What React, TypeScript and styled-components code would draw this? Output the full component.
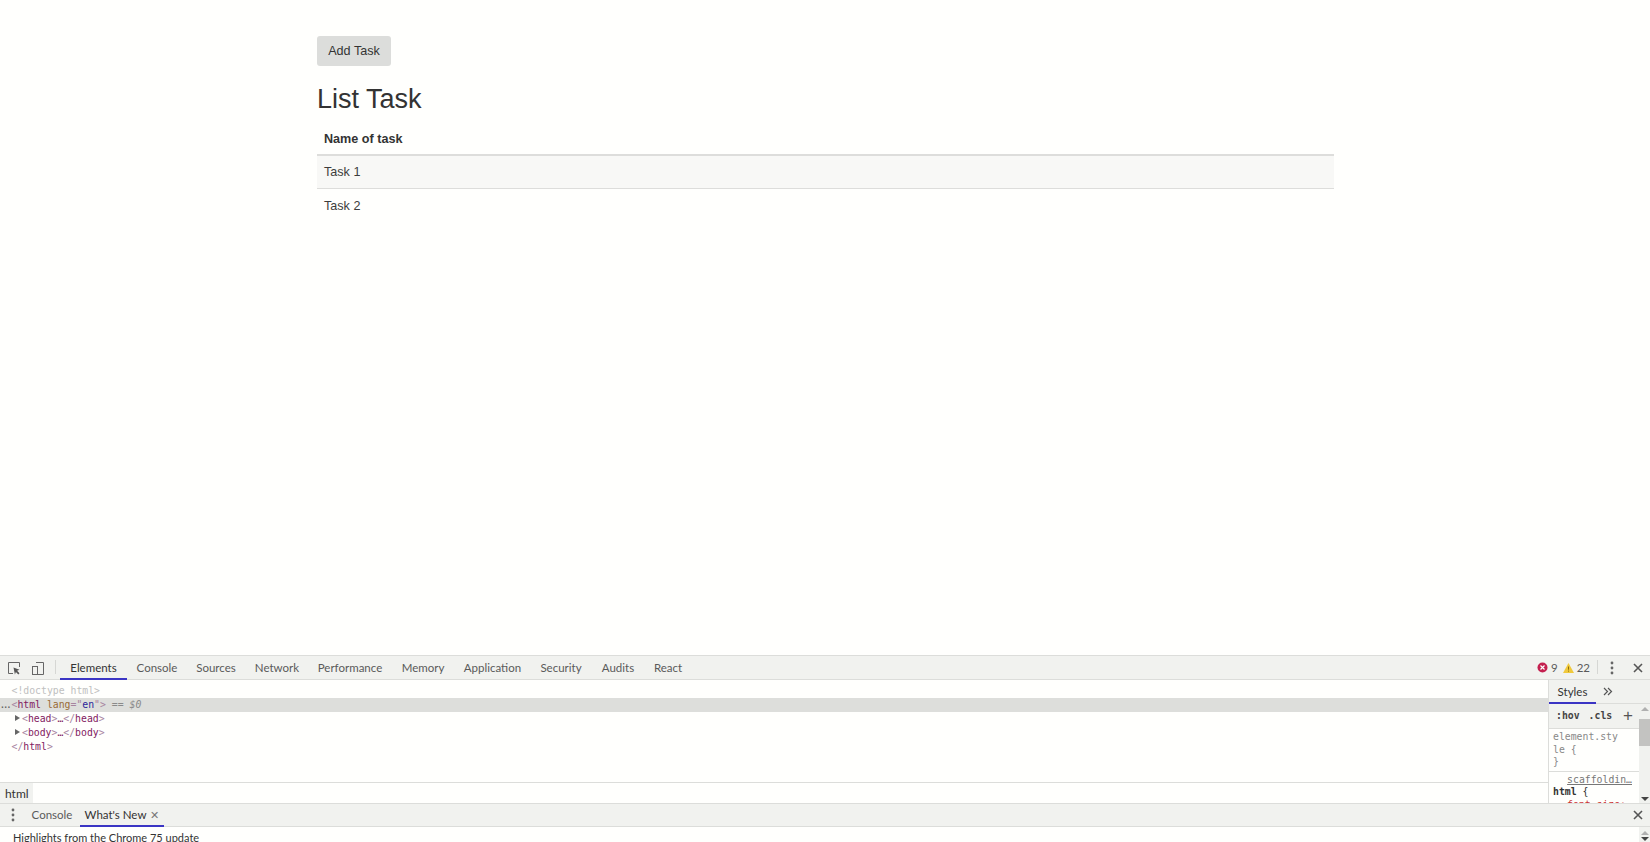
import React from "react";
import styled, { createGlobalStyle } from "styled-components";

const Global = createGlobalStyle`
  html, body { margin: 0; padding: 0; height: 100%; overflow: hidden; background: #fffffd; }
  * { box-sizing: border-box; }
`;
const Shell = styled.div`
  width: 1650px; height: 842px; display: flex; flex-direction: column; overflow: hidden;
  font-family: "Liberation Sans", Arial, sans-serif; color: #333;
`;
const Page = styled.main`
  height: 655px; flex: none; width: 1017px; margin-left: 317px; padding-top: 36px;
`;
const AddButton = styled.button`
  display: block; width: 74px; height: 30px; border: 0; border-radius: 3px; background: #dcdddb;
  color: #333; font: 12.6px/18px "Liberation Sans", Arial, sans-serif; padding: 0;
`;
const Title = styled.h2`
  margin: 18px 0 9px; font-size: 27px; line-height: 30px; font-weight: 500; color: #333;
`;
const Table = styled.table`
  width: 100%; border-collapse: collapse; font-size: 12.6px; line-height: 18px;
`;
const HeadCell = styled.th`
  text-align: left; padding: 6px 7px; border-bottom: 2px solid #dddddb; font-weight: 700; height: 32px; color: #333;
`;
const Row = styled.tr<{ $striped?: boolean }>`
  background: ${p => (p.$striped ? "#f8f8f6" : "transparent")};
`;
const Cell = styled.td<{ $lined?: boolean }>`
  padding: 7px 7px 6px; height: ${p => (p.$lined ? 33 : 34)}px; color: #3c3c3c; border-bottom: ${p => (p.$lined ? "1px solid #dddddb" : "0")};
`;
const Devtools = styled.section`
  flex: none; height: 187px; display: flex; flex-direction: column; overflow: hidden;
  font-family: Lato, "Noto Sans", sans-serif; font-size: 12px; color: #5a5a5a;
`;
const Toolbar = styled.div`
  flex: none; height: 25px; display: flex; align-items: stretch; background: #f1f2ef;
  border-top: 1px solid #dcddda; border-bottom: 1px solid #dcddda;
`;
const IconSlot = styled.div<{ $w: number }>`
  flex: none; width: ${p => p.$w}px; display: flex; align-items: center; justify-content: center; color: #666;
`;
const VDivider = styled.div`
  flex: none; width: 1px; margin: 4px 0 5px; background: #d6d7d4;
`;
const Tab = styled.div<{ $active?: boolean; $w: number }>`
  flex: none; width: ${p => p.$w}px; display: flex; align-items: center; justify-content: center; gap: 4px;
  white-space: nowrap; color: ${p => (p.$active ? "#333" : "#5a5a5a")};
  border-bottom: 2px solid ${p => (p.$active ? "#3b35c4" : "transparent")};
  margin-bottom: -1px; font-size: 11.5px;
`;
const Spacer = styled.div`
  flex: 1;
`;
const Counts = styled.div`
  display: flex; align-items: center; gap: 3px; font-size: 11.5px; padding-right: 7px;
`;
const Split = styled.div`
  flex: none; height: 123px; display: flex;
`;
const DomColumn = styled.div`
  flex: 1; display: flex; flex-direction: column; min-width: 0;
`;
const DomTree = styled.div`
  flex: 1; padding-top: 4px; font: 9.8px/14px "DejaVu Sans Mono", monospace; color: #a8449a;
`;
const DomLine = styled.div<{ $selected?: boolean; $indent?: number }>`
  height: 14px; white-space: pre; padding-left: ${p => p.$indent ?? 11.5}px; position: relative;
  background: ${p => (p.$selected ? "#dddedb" : "transparent")};
`;
const Tag = styled.span`
  color: #82195f;
`;
const Angle = styled.span`
  color: #a784a0;
`;
const Attr = styled.span`
  color: #9a6a33;
`;
const Value = styled.span`
  color: #2b1e9a;
`;
const Faint = styled.span`
  color: #c0c0c0;
`;
const Note = styled.span`
  color: #8a8a8a; font-style: italic;
`;
const Dots = styled.span`
  position: absolute; left: 0; top: 1px; width: 11px; overflow: hidden; color: #666; font-size: 8px; font-weight: 700; letter-spacing: -1.6px;
`;
const Arrow = styled.span`
  display: inline-block; width: 0; height: 0; margin: 0 2px 1px 3px;
  border-left: 5px solid #666; border-top: 3.5px solid transparent; border-bottom: 3.5px solid transparent;
`;
const Crumbs = styled.div`
  flex: none; height: 21px; border-top: 1px solid #dcddda; display: flex; align-items: stretch; font-size: 12px; color: #333;
`;
const Crumb = styled.div`
  width: 33px; background: #f1f2ef; display: flex; align-items: center; padding-left: 5px;
`;
const Sidebar = styled.aside`
  flex: none; width: 102px; border-left: 1px solid #dcddda; display: flex; flex-direction: column; background: #fffffd;
`;
const SideTabs = styled.div`
  flex: none; height: 24px; display: flex; background: #f1f2ef; border-bottom: 1px solid #dcddda;
`;
const SideTab = styled.div`
  width: 47px; margin-bottom: -1px; display: flex; align-items: center; justify-content: center;
  border-bottom: 2px solid #3b35c4; color: #333; font-size: 11.5px;
`;
const More = styled.div`
  margin-left: 7px; display: flex; align-items: center;
`;
const SideBody = styled.div`
  flex: 1; display: flex; min-height: 0;
`;
const Styles = styled.div`
  width: 90px; flex: none; overflow: hidden; font: 9.8px/12.5px "DejaVu Sans Mono", monospace; color: #888;
`;
const Filter = styled.div`
  height: 25px; background: #f1f2ef; display: flex; align-items: center; padding-left: 7px; gap: 9px; color: #444;
  font-weight: 700; position: relative; border-bottom: 1px solid #dcddda;
`;
const Plus = styled.span`
  position: absolute; right: 6px; top: 2px; font: 400 17px/20px "Liberation Sans", sans-serif; color: #555;
`;
const Rule = styled.div`
  padding: 2px 0 2px 4px; border-bottom: 1px solid #dcddda;
`;
const Rule2 = styled.div`
  padding: 2px 0 0 4px; color: #333;
`;
const Source = styled.div`
  text-decoration: underline; color: #777; text-align: right; padding-right: 7px;
`;
const Sel = styled.b`
  color: #333;
`;
const Prop = styled.div`
  color: #c33; padding-left: 14px;
`;
const Scrollbar = styled.div`
  flex: 1; background: #f1f2ef; display: flex; flex-direction: column; align-items: center; justify-content: space-between; padding: 3px 0 2px;
`;
const Thumb = styled.div`
  position: absolute; left: 0; right: 0; top: 8px; height: 27px; background: #c3c3c1;
`;
const Track = styled.div`
  position: relative; flex: 1; width: 100%;
`;
const TriUp = styled.div`
  width: 0; height: 0; border-left: 4px solid transparent; border-right: 4px solid transparent; border-bottom: 4px solid #b0b0b0;
`;
const TriDown = styled.div`
  width: 0; height: 0; border-left: 4px solid transparent; border-right: 4px solid transparent; border-top: 4px solid #444;
`;
const Drawer = styled(Toolbar)`
  height: 24px;
`;
const Close = styled.span`
  color: #777; font-size: 11px; line-height: 11px;
`;
const DrawerBody = styled.div`
  flex: none; height: 15px; display: flex; background: #fffffd;
`;
const DrawerText = styled.div`
  flex: 1; padding: 3px 0 0 13px; font-size: 11px; line-height: 16px; color: #333; overflow: hidden; white-space: nowrap;
`;
const MiniBar = styled.div`
  flex: none; width: 11px; background: #f1f2ef; display: flex; flex-direction: column; align-items: center; padding-top: 4px; gap: 2px;
`;

const Kebab = () => (
  <svg width="4" height="14" viewBox="0 0 4 14" fill="#666"><circle cx="2" cy="2" r="1.4" /><circle cx="2" cy="7" r="1.4" /><circle cx="2" cy="12" r="1.4" /></svg>
);
const X = () => (
  <svg width="10" height="10" viewBox="0 0 10 10" stroke="#555" strokeWidth="1.6"><path d="M1 1l8 8M9 1l-8 8" /></svg>
);

export default function App() {
  return (
    <Shell>
      <Global />
      <Page>
        <AddButton>Add Task</AddButton>
        <Title>List Task</Title>
        <Table>
          <thead><tr><HeadCell>Name of task</HeadCell></tr></thead>
          <tbody>
            <Row $striped><Cell $lined>Task 1</Cell></Row>
            <Row><Cell>Task 2</Cell></Row>
          </tbody>
        </Table>
      </Page>
      <Devtools>
        <Toolbar>
          <IconSlot $w={28}>
            <svg width="14" height="14" viewBox="0 0 14 14" fill="none" stroke="#666"><path d="M6 12.5H1.5v-11h11V6" /><path d="M6.5 6.5l6 2.3-2.4 1 2.4 2.4-1.2 1.2-2.4-2.4-1 2.4z" fill="#555" stroke="none" /></svg>
          </IconSlot>
          <IconSlot $w={20}>
            <svg width="14" height="14" viewBox="0 0 14 14" fill="none" stroke="#666"><rect x="1.5" y="5.5" width="5" height="8" /><path d="M5 1.5h7.5v12H7" /></svg>
          </IconSlot>
          <IconSlot $w={7} />
          <VDivider />
          <IconSlot $w={4} />
          <Tab $active $w={67}>Elements</Tab>
          <Tab $w={60}>Console</Tab>
          <Tab $w={58}>Sources</Tab>
          <Tab $w={64}>Network</Tab>
          <Tab $w={82}>Performance</Tab>
          <Tab $w={64}>Memory</Tab>
          <Tab $w={75}>Application</Tab>
          <Tab $w={62}>Security</Tab>
          <Tab $w={52}>Audits</Tab>
          <Tab $w={48}>React</Tab>
          <Spacer />
          <Counts>
            <svg width="11" height="11" viewBox="0 0 11 11"><circle cx="5.5" cy="5.5" r="5" fill="#c4204f" /><path d="M3.5 3.5l4 4M7.5 3.5l-4 4" stroke="#fff" strokeWidth="1.2" /></svg>
            <span>9</span>
            <svg width="11" height="10" viewBox="0 0 11 10" style={{ marginLeft: 2 }}><path d="M5.5 0L11 10H0z" fill="#f0c93c" /><path d="M5.5 3.5v3.2M5.5 7.6v1" stroke="#8a6d10" strokeWidth="1" /></svg>
            <span>22</span>
          </Counts>
          <VDivider />
          <IconSlot $w={28}><Kebab /></IconSlot>
          <IconSlot $w={24}><X /></IconSlot>
        </Toolbar>
        <Split>
          <DomColumn>
            <DomTree>
              <DomLine><Faint>&lt;!doctype html&gt;</Faint></DomLine>
              <DomLine $selected><Dots>...</Dots><Angle>&lt;</Angle><Tag>html</Tag> <Attr>lang</Attr><Angle>="</Angle><Value>en</Value><Angle>"&gt;</Angle> <Note>== $0</Note></DomLine>
              <DomLine $indent={12}><Arrow /><Angle>&lt;</Angle><Tag>head</Tag><Angle>&gt;</Angle><Tag>…</Tag><Angle>&lt;/</Angle><Tag>head</Tag><Angle>&gt;</Angle></DomLine>
              <DomLine $indent={12}><Arrow /><Angle>&lt;</Angle><Tag>body</Tag><Angle>&gt;</Angle><Tag>…</Tag><Angle>&lt;/</Angle><Tag>body</Tag><Angle>&gt;</Angle></DomLine>
              <DomLine><Angle>&lt;/</Angle><Tag>html</Tag><Angle>&gt;</Angle></DomLine>
            </DomTree>
            <Crumbs><Crumb>html</Crumb></Crumbs>
          </DomColumn>
          <Sidebar>
            <SideTabs>
              <SideTab>Styles</SideTab>
              <More>
                <svg width="10" height="9" viewBox="0 0 10 9" fill="none" stroke="#555" strokeWidth="1.2"><path d="M1 1l3.5 3.5L1 8M5 1l3.5 3.5L5 8" /></svg>
              </More>
            </SideTabs>
            <SideBody>
              <Styles>
                <Filter>
                  <span>:hov</span><span>.cls</span><Plus>+</Plus>
                </Filter>
                <Rule>element.sty<br />le {"{"}<br />{"}"}</Rule>
                <Rule2>
                  <Source>scaffoldin…</Source>
                  <Sel>html</Sel> {"{"}
                  <Prop>font-size:</Prop>
                </Rule2>
              </Styles>
              <Scrollbar>
                <TriUp />
                <Track><Thumb /></Track>
                <TriDown />
              </Scrollbar>
            </SideBody>
          </Sidebar>
        </Split>
        <Drawer>
          <IconSlot $w={26}><Kebab /></IconSlot>
          <Tab $w={52}>Console</Tab>
          <IconSlot $w={2} />
          <Tab $active $w={84}>What's New <Close>✕</Close></Tab>
          <Spacer />
          <IconSlot $w={24}><X /></IconSlot>
        </Drawer>
        <DrawerBody>
          <DrawerText>Highlights from the Chrome 75 update</DrawerText>
          <MiniBar><TriUp /><TriDown /></MiniBar>
        </DrawerBody>
      </Devtools>
    </Shell>
  );
}
